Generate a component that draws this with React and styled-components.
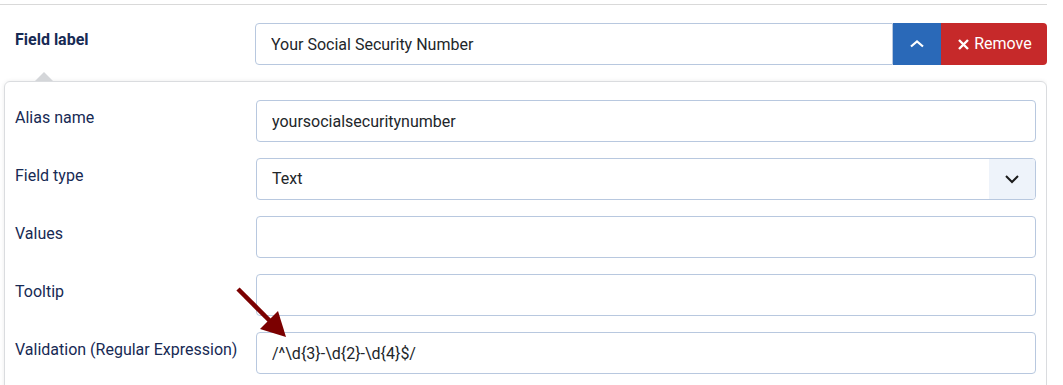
import React from "react";
import styled, { createGlobalStyle } from "styled-components";

const GlobalStyle = createGlobalStyle`
  html, body {
    margin: 0;
    background: #ffffff;
  }
  body {
    font-family: Roboto, "Liberation Sans", sans-serif;
    font-size: 16px;
    line-height: 1.5;
    color: #22262a;
  }
`;

const rows = [
  { label: "Alias name", value: "yoursocialsecuritynumber" },
  { label: "Field type", value: "Text", select: true },
  { label: "Values", value: "" },
  { label: "Tooltip", value: "" },
  { label: "Validation (Regular Expression)", value: "/^\\d{3}-\\d{2}-\\d{4}$/" },
];

export default function App() {
  return (
    <>
      <GlobalStyle />
      <Page>
        <HeaderRow>
          <Label $bold>Field label</Label>
          <InputGroup>
            <TextInput $grouped readOnly defaultValue='Your Social Security Number' />
            <MoveButton aria-label='Move up'>
              <svg width='16' height='10' viewBox='0 0 16 10'>
                <path d='M2 7.5 L8 2.5 L14 7.5' fill='none' stroke='#fff' strokeWidth='2.2' />
              </svg>
            </MoveButton>
            <RemoveButton>
              <svg width='11' height='11' viewBox='0 0 11 11'>
                <path d='M1 1 L10 10 M10 1 L1 10' stroke='#fff' strokeWidth='2.4' />
              </svg>
              Remove
            </RemoveButton>
          </InputGroup>
        </HeaderRow>

        <Panel>
          {rows.map((row) => (
            <FormRow key={row.label}>
              <Label>{row.label}</Label>
              {row.select ? (
                <SelectBox>
                  <SelectValue>{row.value}</SelectValue>
                  <SelectToggle>
                    <svg width='16' height='10' viewBox='0 0 16 10'>
                      <path d='M2 2 L8 8 L14 2' fill='none' stroke='#1b1b1b' strokeWidth='2' />
                    </svg>
                  </SelectToggle>
                </SelectBox>
              ) : (
                <TextInput readOnly defaultValue={row.value} />
              )}
            </FormRow>
          ))}
        </Panel>

        {/* annotation arrow pointing at the regex field */}
        <Arrow width='60' height='60' viewBox='0 0 60 60'>
          <line x1='3' y1='3' x2='38' y2='38' stroke='#7b0000' strokeWidth='4.5' />
          <polygon points='51,51 25,43 43,25' fill='#7b0000' />
        </Arrow>
      </Page>
    </>
  );
}

const Page = styled.div`
  position: relative;
  width: 1047px;
  padding-top: 4px;
  overflow: hidden;
  height: 381px;
`;

const HeaderRow = styled.div`
  display: grid;
  grid-template-columns: 255px 1fr;
  align-items: start;
  border-top: 1px solid #d9d9d9;
  padding-top: 18px;
`;

const Label = styled.div`
  padding: 5px 0 0 15px;
  color: #172a54;
  font-weight: ${(p) => (p.$bold ? 700 : 400)};
`;

const InputGroup = styled.div`
  display: flex;
  height: 42px;
`;

const TextInput = styled.input`
  flex: 1;
  box-sizing: border-box;
  height: 42px;
  width: 100%;
  padding: 0 15px;
  border: 1px solid #b8c8df;
  border-radius: ${(p) => (p.$grouped ? "4px 0 0 4px" : "4px")};
  font: inherit;
  color: #22262a;
  background: #fff;
  outline: none;
`;

const MoveButton = styled.button`
  width: 48px;
  border: none;
  background: #2a69b8;
  display: flex;
  align-items: center;
  justify-content: center;
  padding: 0;
`;

const RemoveButton = styled.button`
  width: 106px;
  border: none;
  border-radius: 0 4px 4px 0;
  background: #c6292a;
  color: #fff;
  font: inherit;
  display: flex;
  align-items: center;
  justify-content: center;
  gap: 5px;
  padding: 0 0 0 2px;
`;

const Panel = styled.div`
  position: relative;
  margin: 16px 0 0 4px;
  border: 1px solid #dadcdf;
  border-radius: 6px;
  box-shadow: 0 0 4px rgba(0, 0, 0, 0.08);
  padding: 18px 10px 20px 10px;
  display: flex;
  flex-direction: column;
  gap: 16px;

  &::before {
    content: "";
    position: absolute;
    top: -10px;
    left: 30px;
    border-left: 9px solid transparent;
    border-right: 9px solid transparent;
    border-bottom: 9px solid #d4d6d9;
  }
`;

const FormRow = styled.div`
  display: grid;
  grid-template-columns: 241px 1fr;
  align-items: start;

  ${Label} {
    padding-left: 0;
    padding-top: 6px;
  }
`;

const SelectBox = styled.div`
  display: flex;
  height: 42px;
  box-sizing: border-box;
  border: 1px solid #b8c8df;
  border-radius: 4px;
  overflow: hidden;
`;

const SelectValue = styled.div`
  flex: 1;
  display: flex;
  align-items: center;
  padding: 0 15px;
`;

const SelectToggle = styled.div`
  width: 46px;
  background: #eef3fa;
  display: flex;
  align-items: center;
  justify-content: center;
`;

const Arrow = styled.svg`
  position: absolute;
  left: 235px;
  top: 286px;
`;
